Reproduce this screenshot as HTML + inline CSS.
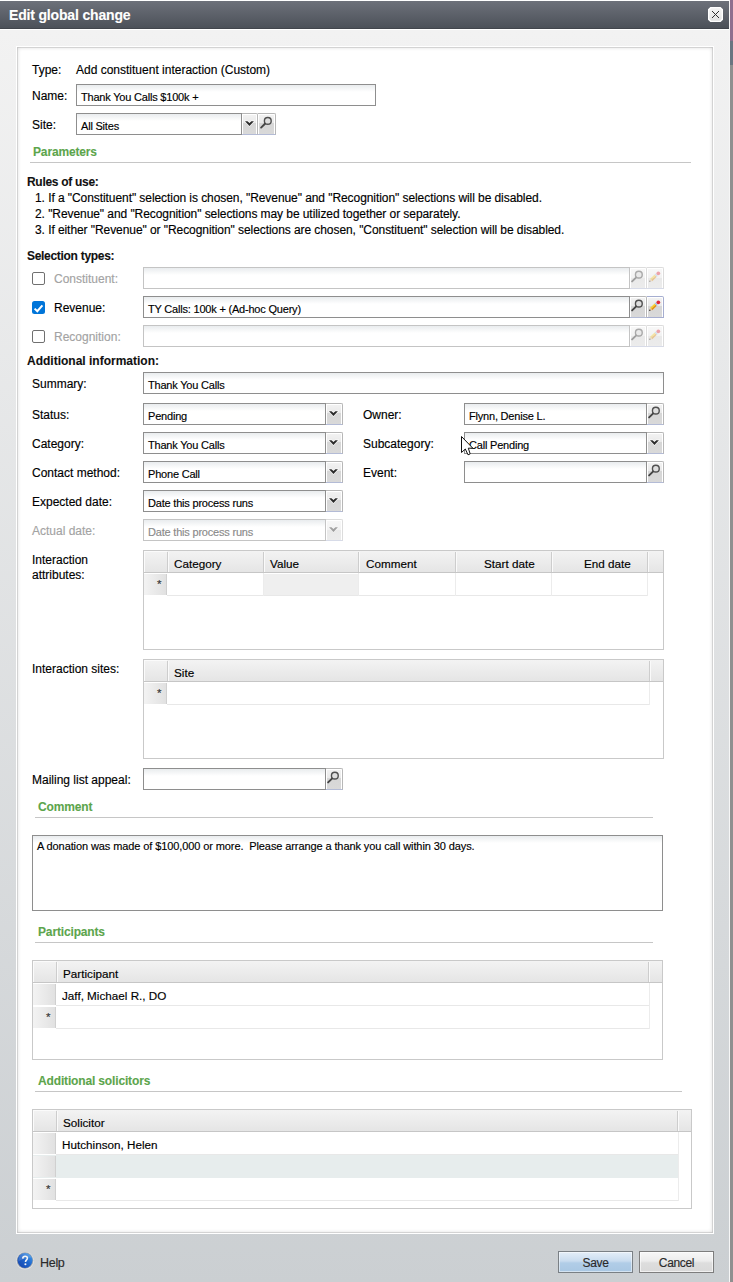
<!DOCTYPE html>
<html><head><meta charset="utf-8"><title>Edit global change</title>
<style>
*{box-sizing:border-box;margin:0;padding:0}
html,body{width:733px;height:1282px;overflow:hidden;background:#8f8f8f;font-family:"Liberation Sans",sans-serif;color:#000}
.a{position:absolute}
.t{position:absolute;white-space:nowrap;line-height:12px;font-size:12px;-webkit-text-stroke:0.15px currentColor}
.s11{font-size:11px;line-height:11px;letter-spacing:-0.2px;margin-top:1px}
.b{font-weight:bold;letter-spacing:-0.3px;-webkit-text-stroke:0.1px currentColor}
.g{color:#5ca54c;font-weight:bold;letter-spacing:-0.15px;-webkit-text-stroke:0.1px currentColor}
.dis{color:#a3a3a3}
.hr{position:absolute;height:1px;background:#c6c6c6}
.inp{position:absolute;border:1px solid #8e8e8e;background:linear-gradient(#e9ecee,#fff 7px)}
.inp.d{border-color:#c4c4c4}
.btn{position:absolute;border:1px solid #b7b7b7;border-left:0;border-bottom-color:#b3bbd6;border-top-right-radius:2px;
 background:linear-gradient(#f3f3f3,#e9e9e9 44%,#d6d6d6 44%,#d9d9d9);box-shadow:inset 1px 1px 0 #fff,inset -1px 0 0 #fff}
.btn.d{border-color:#dcdcdc;border-bottom-color:#d7dbe8;background:linear-gradient(#f8f8f8,#f2f2f2 50%,#e9e9e9 50%,#ececec)}
.btn svg{position:absolute;left:0;top:0}
.grid{position:absolute;border:1px solid #c9c9c9;background:#fff}
.gh{position:absolute;left:0;top:0;height:22px;background:linear-gradient(#f3f3f3,#e5e5e5);border-bottom:1px solid #c6c6c6}
.hd{position:absolute;top:1px;width:2px;height:20px;border-left:1px solid #cdcdcd;border-right:1px solid #fafafa}
.rh{position:absolute;left:0;width:23px;height:21px;background:linear-gradient(90deg,#f3f3f3,#e1e1e1);border-right:1px solid #d0d0d0}
.gl{position:absolute;height:1px;background:#e8e8e8}
.gv{position:absolute;width:1px;background:#ececec}
.star{left:13px;font-size:11px;color:#333}
.cell{position:absolute;white-space:nowrap;font-size:11.7px;line-height:12px;-webkit-text-stroke:0.15px currentColor}
</style></head><body>
<svg width="0" height="0" style="position:absolute"><defs>
<symbol id="chev" viewBox="0 0 17 22"><path d="M3 7.2H5.5L7.45 8.9L9.4 7.2H11.9L7.45 12Z" fill="#fff" opacity="0.7" stroke="#fff" stroke-width="1.4"/><path d="M3 7.2H5.5L7.45 8.9L9.4 7.2H11.9L7.45 12Z" fill="#2b2b2b"/></symbol>
<symbol id="mag" viewBox="0 0 18 22"><circle cx="9.8" cy="6.9" r="3.4" fill="#dedede" stroke="#505050" stroke-width="1.4"/><path d="M3.1 13.6L7 9.8" stroke="#444" stroke-width="1.9" stroke-linecap="round"/></symbol>
<symbol id="mag2" viewBox="0 0 17 22"><circle cx="8.85" cy="6.65" r="3.4" fill="#dedede" stroke="#505050" stroke-width="1.4"/><path d="M2.1 13.4L6 9.6" stroke="#444" stroke-width="1.9" stroke-linecap="round"/></symbol>
<symbol id="pen" viewBox="0 0 17 22"><path d="M3 10.93L7.64 6.53L8.74 7.69L4.1 12.09Z" fill="#f8d22c"/><path d="M4.1 12.09L8.74 7.69L9.84 8.85L5.2 13.25Z" fill="#e4900f"/><path d="M2.5 13.6L3 10.93L5.2 13.25Z" fill="#f2c89a"/><circle cx="2.85" cy="13.25" r="0.65" fill="#1a1a1a"/><path d="M7.64 6.53L8.66 5.57L10.86 7.89L9.84 8.85Z" fill="#9fc0ec"/><circle cx="11.3" cy="5.3" r="1.85" fill="#e02838"/></symbol>
</defs></svg>
<!-- right strip -->
<div class="a" style="left:730px;top:0;width:3px;height:41px;background:#8e6f8e"></div>
<div class="a" style="left:730px;top:41px;width:3px;height:24px;background:#6a7581"></div>

<!-- dialog -->
<div class="a" style="left:0;top:0;width:730px;height:1282px;background:linear-gradient(#f2f2f2 30px,#cbcfd2 1282px);border-top:1px solid #fff;border-right:1px solid #f6f6f6"></div>
<div class="a" style="left:0;top:1px;width:729px;height:28px;background:linear-gradient(#6d717a,#4c5159);border-bottom:1px solid #41454c"></div>
<div class="a" style="left:0;top:29px;width:729px;height:1px;background:#fff"></div>
<div class="t b" style="left:9px;top:8px;font-size:14px;line-height:14px;color:#fff;letter-spacing:-0.17px">Edit global change</div>
<!-- close button -->
<div class="a" style="left:708px;top:7px;width:15px;height:15px">
<svg width="15" height="15" viewBox="0 0 15 15"><defs><linearGradient id="cg" x1="0" y1="0" x2="0" y2="1"><stop offset="0" stop-color="#f4f4f4"/><stop offset="0.5" stop-color="#ececec"/><stop offset="1" stop-color="#dedede"/></linearGradient></defs><path d="M3 0.5H12L14.5 3V12L12 14.5H3L0.5 12V3Z" fill="url(#cg)" stroke="#fff" stroke-width="1.6"/><path d="M4 4L11 11M11 4L4 11" stroke="#2e2e2e" stroke-width="1"/></svg>
</div>

<!-- panel -->
<div class="a" style="left:16px;top:46px;width:698px;height:1188px;border:1px solid #fff;background:#fff">
 <div class="a" style="left:0;top:0;width:696px;height:1186px;box-shadow:inset 0 0 4px rgba(0,0,0,0.2),inset 0 0 0 1px rgba(0,0,0,0.1)"></div>
</div>

<!-- top fields -->
<div class="t" style="left:32px;top:64px">Type:</div>
<div class="t" style="left:76px;top:64px">Add constituent interaction (Custom)</div>
<div class="t" style="left:32px;top:90px">Name:</div>
<div class="inp" style="left:76px;top:84px;width:300px;height:22px"></div>
<div class="t s11" style="left:81px;top:91px">Thank You Calls $100k +</div>
<div class="t" style="left:32px;top:119px">Site:</div>
<div class="inp" style="left:76px;top:113px;width:166px;height:22px"></div>
<div class="t s11" style="left:81px;top:120px">All Sites</div>
<div class="btn" style="left:242px;top:113px;width:16px;height:22px"><svg width="17" height="22" viewBox="0 0 17 22" style="left:-0.5px"><use href="#chev"/></svg></div>
<div class="btn" style="left:258px;top:113px;width:18px;height:22px"><svg width="18" height="22"><use href="#mag"/></svg></div>

<div class="t g" style="left:33px;top:146px">Parameters</div>
<div class="hr" style="left:30px;top:162px;width:661px"></div>
<div class="t b" style="left:27px;top:176px;color:#111">Rules of use:</div>
<div class="t" style="left:35px;top:192px;letter-spacing:-0.07px">1. If a "Constituent" selection is chosen, "Revenue" and "Recognition" selections will be disabled.</div>
<div class="t" style="left:35px;top:208px;letter-spacing:-0.07px">2. "Revenue" and "Recognition" selections may be utilized together or separately.</div>
<div class="t" style="left:35px;top:224px;letter-spacing:-0.07px">3. If either "Revenue" or "Recognition" selections are chosen, "Constituent" selection will be disabled.</div>
<div class="t b" style="left:27px;top:250px;color:#111">Selection types:</div>

<!-- checkboxes -->
<div class="a" style="left:32px;top:272px;width:13px;height:13px;border:1.3px solid #707070;border-radius:2px;background:#fff"></div>
<div class="a" style="left:32px;top:301px;width:13px;height:13px;border-radius:2.5px;background:#0075d9"><svg width="13" height="13" viewBox="0 0 13 13"><path d="M2.6 6.6L5.3 9.2L10.4 3.4" fill="none" stroke="#fff" stroke-width="2"/></svg></div>
<div class="a" style="left:32px;top:330px;width:13px;height:13px;border:1.3px solid #707070;border-radius:2px;background:#fff"></div>
<div class="t dis" style="left:54px;top:273px">Constituent:</div>
<div class="t" style="left:54px;top:302px">Revenue:</div>
<div class="t dis" style="left:54px;top:331px">Recognition:</div>

<div class="inp d" style="left:143px;top:267px;width:487px;height:22px"></div>
<div class="btn d" style="left:630px;top:267px;width:17px;height:22px"><svg width="17" height="22" style="opacity:.45"><use href="#mag2"/></svg></div>
<div class="btn d" style="left:647px;top:267px;width:17px;height:22px"><svg width="17" height="22" style="opacity:.4"><use href="#pen"/></svg></div>
<div class="inp" style="left:143px;top:296px;width:487px;height:22px"></div>
<div class="t s11" style="left:148px;top:303px">TY Calls: 100k + (Ad-hoc Query)</div>
<div class="btn" style="left:630px;top:296px;width:17px;height:22px"><svg width="17" height="22"><use href="#mag2"/></svg></div>
<div class="btn" style="left:647px;top:296px;width:17px;height:22px;border-color:#a6aed0"><svg width="17" height="22"><use href="#pen"/></svg></div>
<div class="inp d" style="left:143px;top:325px;width:487px;height:22px"></div>
<div class="btn d" style="left:630px;top:325px;width:17px;height:22px"><svg width="17" height="22" style="opacity:.45"><use href="#mag2"/></svg></div>
<div class="btn d" style="left:647px;top:325px;width:17px;height:22px"><svg width="17" height="22" style="opacity:.4"><use href="#pen"/></svg></div>

<div class="t b" style="left:27px;top:355px;color:#111;letter-spacing:0">Additional information:</div>

<!-- additional info -->
<div class="t" style="left:32px;top:378px">Summary:</div>
<div class="inp" style="left:143px;top:372px;width:521px;height:22px"></div>
<div class="t s11" style="left:148px;top:379px">Thank You Calls</div>

<div class="t" style="left:32px;top:409px">Status:</div>
<div class="inp" style="left:143px;top:403px;width:183px;height:22px"></div>
<div class="t s11" style="left:148px;top:410px">Pending</div>
<div class="btn" style="left:326px;top:403px;width:17px;height:22px"><svg width="17" height="22"><use href="#chev"/></svg></div>

<div class="t" style="left:32px;top:438px">Category:</div>
<div class="inp" style="left:143px;top:432px;width:183px;height:22px"></div>
<div class="t s11" style="left:148px;top:439px">Thank You Calls</div>
<div class="btn" style="left:326px;top:432px;width:17px;height:22px"><svg width="17" height="22"><use href="#chev"/></svg></div>

<div class="t" style="left:32px;top:467px">Contact method:</div>
<div class="inp" style="left:143px;top:461px;width:183px;height:22px"></div>
<div class="t s11" style="left:148px;top:468px">Phone Call</div>
<div class="btn" style="left:326px;top:461px;width:17px;height:22px"><svg width="17" height="22"><use href="#chev"/></svg></div>

<div class="t" style="left:32px;top:496px">Expected date:</div>
<div class="inp" style="left:143px;top:490px;width:183px;height:22px"></div>
<div class="t s11" style="left:148px;top:497px">Date this process runs</div>
<div class="btn" style="left:326px;top:490px;width:17px;height:22px"><svg width="17" height="22"><use href="#chev"/></svg></div>

<div class="t dis" style="left:32px;top:525px">Actual date:</div>
<div class="inp d" style="left:143px;top:519px;width:183px;height:22px"></div>
<div class="t s11 dis" style="left:148px;top:526px;color:#8a8a8a">Date this process runs</div>
<div class="btn d" style="left:326px;top:519px;width:17px;height:22px"><svg width="17" height="22" style="opacity:.4"><use href="#chev"/></svg></div>

<div class="t" style="left:363px;top:409px">Owner:</div>
<div class="inp" style="left:464px;top:403px;width:183px;height:22px"></div>
<div class="t s11" style="left:469px;top:410px">Flynn, Denise L.</div>
<div class="btn" style="left:647px;top:403px;width:17px;height:22px"><svg width="17" height="22"><use href="#mag2"/></svg></div>

<div class="t" style="left:363px;top:438px">Subcategory:</div>
<div class="inp" style="left:464px;top:432px;width:183px;height:22px"></div>
<div class="t s11" style="left:469px;top:439px">Call Pending</div>
<div class="btn" style="left:647px;top:432px;width:17px;height:22px"><svg width="17" height="22"><use href="#chev"/></svg></div>

<div class="t" style="left:363px;top:467px">Event:</div>
<div class="inp" style="left:464px;top:461px;width:183px;height:22px"></div>
<div class="btn" style="left:647px;top:461px;width:17px;height:22px"><svg width="17" height="22"><use href="#mag2"/></svg></div>

<!-- interaction attributes grid -->
<div class="t" style="left:32px;top:554px">Interaction</div>
<div class="t" style="left:32px;top:569px">attributes:</div>
<div class="grid" style="left:143px;top:550px;width:521px;height:100px">
 <div class="gh" style="width:519px"></div>
 <div class="a" style="left:0;top:0;width:23px;height:21px;box-shadow:inset 1px 1px 0 #fbfbfb"></div>
 <div class="hd" style="left:23px"></div>
 <div class="hd" style="left:119px"></div>
 <div class="hd" style="left:214px"></div>
 <div class="hd" style="left:311px"></div>
 <div class="hd" style="left:407px"></div>
 <div class="hd" style="left:503px"></div>
 <div class="a" style="left:119px;top:23px;width:95px;height:21px;background:#efefef"></div>
 <div class="rh" style="top:23px"></div>
 <div class="gl" style="left:23px;top:44px;width:481px"></div>
 <div class="gv" style="left:119px;top:22px;height:23px"></div>
 <div class="gv" style="left:214px;top:22px;height:23px"></div>
 <div class="gv" style="left:311px;top:22px;height:23px"></div>
 <div class="gv" style="left:407px;top:22px;height:23px"></div>
 <div class="gv" style="left:503px;top:22px;height:23px"></div>
 <div class="cell star" style="top:27px">*</div>
 <div class="cell" style="left:30px;top:7px">Category</div>
 <div class="cell" style="left:126px;top:7px">Value</div>
 <div class="cell" style="left:222px;top:7px">Comment</div>
 <div class="cell" style="left:340px;top:7px">Start date</div>
 <div class="cell" style="left:440px;top:7px">End date</div>
</div>

<!-- interaction sites grid -->
<div class="t" style="left:32px;top:663px">Interaction sites:</div>
<div class="grid" style="left:143px;top:659px;width:521px;height:100px">
 <div class="gh" style="width:519px"></div>
 <div class="a" style="left:0;top:0;width:23px;height:21px;box-shadow:inset 1px 1px 0 #fbfbfb"></div>
 <div class="hd" style="left:23px"></div>
 <div class="hd" style="left:505px"></div>
 <div class="rh" style="top:23px"></div>
 <div class="gl" style="left:23px;top:44px;width:483px"></div>
 <div class="gv" style="left:505px;top:22px;height:23px"></div>
 <div class="cell star" style="top:27px">*</div>
 <div class="cell" style="left:30px;top:7px">Site</div>
</div>

<div class="t" style="left:32px;top:774px">Mailing list appeal:</div>
<div class="inp" style="left:143px;top:768px;width:183px;height:22px"></div>
<div class="btn" style="left:326px;top:768px;width:17px;height:22px"><svg width="17" height="22"><use href="#mag2"/></svg></div>

<!-- comment -->
<div class="t g" style="left:38px;top:801px">Comment</div>
<div class="hr" style="left:35px;top:817px;width:618px"></div>
<div class="inp" style="left:32px;top:835px;width:631px;height:76px"></div>
<div class="t s11" style="left:37px;top:840px;letter-spacing:-0.1px">A donation was made of $100,000 or more.&nbsp; Please arrange a thank you call within 30 days.</div>

<!-- participants -->
<div class="t g" style="left:38px;top:926px">Participants</div>
<div class="hr" style="left:35px;top:942px;width:618px"></div>
<div class="grid" style="left:32px;top:960px;width:631px;height:100px">
 <div class="gh" style="width:629px"></div>
 <div class="a" style="left:0;top:0;width:23px;height:21px;box-shadow:inset 1px 1px 0 #fbfbfb"></div>
 <div class="hd" style="left:23px"></div>
 <div class="hd" style="left:615px"></div>
 <div class="rh" style="top:23px"></div>
 <div class="gl" style="left:23px;top:44px;width:593px"></div>
 <div class="gv" style="left:616px;top:22px;height:23px"></div>
 <div class="cell" style="left:29px;top:29px">Jaff, Michael R., DO</div>
 <div class="rh" style="top:46px"></div>
 <div class="gl" style="left:23px;top:67px;width:593px"></div>
 <div class="gv" style="left:616px;top:45px;height:23px"></div>
 <div class="cell star" style="top:50px">*</div>
 <div class="cell" style="left:30px;top:7px">Participant</div>
</div>

<!-- additional solicitors -->
<div class="t g" style="left:38px;top:1075px">Additional solicitors</div>
<div class="hr" style="left:35px;top:1091px;width:647px"></div>
<div class="grid" style="left:32px;top:1109px;width:660px;height:100px">
 <div class="gh" style="width:658px"></div>
 <div class="a" style="left:0;top:0;width:23px;height:21px;box-shadow:inset 1px 1px 0 #fbfbfb"></div>
 <div class="hd" style="left:23px"></div>
 <div class="hd" style="left:644px"></div>
 <div class="rh" style="top:23px"></div>
 <div class="gl" style="left:23px;top:44px;width:622px"></div>
 <div class="gv" style="left:645px;top:22px;height:23px"></div>
 <div class="cell" style="left:29px;top:29px">Hutchinson, Helen</div>
 <div class="a" style="left:0;top:45px;width:646px;height:23px;background:#e7eded"></div>
 <div class="rh" style="top:46px"></div>
 <div class="gv" style="left:645px;top:45px;height:23px"></div>
 <div class="rh" style="top:69px"></div>
 <div class="gl" style="left:23px;top:90px;width:622px"></div>
 <div class="gv" style="left:645px;top:68px;height:23px"></div>
 <div class="cell star" style="top:73px">*</div>
 <div class="cell" style="left:30px;top:7px">Solicitor</div>
</div>

<!-- mouse cursor -->
<svg class="a" style="left:461px;top:436px" width="14" height="21" viewBox="0 0 14 21"><path d="M0.5 0.5V16.5L4.3 13L7 18.8L9.2 17.9L7.3 12.2H11.8Z" fill="#fff" stroke="#111" stroke-width="1" stroke-linejoin="miter"/></svg>


<!-- footer -->
<div class="a" style="left:16px;top:1252px;width:18px;height:18px">
<svg width="18" height="18" viewBox="0 0 18 18"><defs><linearGradient id="hg" x1="0.1" y1="0.9" x2="0.9" y2="0.1"><stop offset="0" stop-color="#1848b0"/><stop offset="0.55" stop-color="#1f66cc"/><stop offset="1" stop-color="#3f96e8"/></linearGradient></defs>
<circle cx="9" cy="8.7" r="8.9" fill="#eceef0" opacity="0.8"/><circle cx="9" cy="8.5" r="8.3" fill="#a2a6aa"/><circle cx="9" cy="8.5" r="7.5" fill="url(#hg)"/><path d="M2.5 9.5C5 7.5 10 6 15.5 5.5C14 2.5 11.5 1 9 1C5 1 2 4 2.5 9.5Z" fill="#fff" opacity="0.15"/><path d="M6.7 6.6C6.8 5.1 7.8 4.3 9.1 4.3C10.5 4.3 11.4 5.1 11.4 6.3C11.4 7.8 9.5 8 9.5 10" fill="none" stroke="#f4f4f4" stroke-width="1.6"/><circle cx="9.4" cy="12.3" r="1.05" fill="#f4f4f4"/></svg>
</div>
<div class="t" style="left:40px;top:1257px;font-size:12.5px;line-height:12px;color:#2a2a2a;letter-spacing:-0.3px">Help</div>
<div class="a" style="left:558px;top:1251px;width:75px;height:22px;border:1px solid #7a8085;background:linear-gradient(#e4eef8,#c9dcef 45%,#b1cde7 55%,#a9c7e3);box-shadow:inset 0 0 0 1px rgba(255,255,255,0.5)"></div>
<div class="t" style="left:558px;width:75px;text-align:center;top:1257px;color:#2a2a2a;letter-spacing:-0.35px">Save</div>
<div class="a" style="left:639px;top:1251px;width:75px;height:22px;border:1px solid #7d7d7d;background:linear-gradient(#f7f7f7,#ececec 45%,#dddddd 55%,#d9d9d9);box-shadow:inset 0 0 0 1px rgba(255,255,255,0.6)"></div>
<div class="t" style="left:639px;width:75px;text-align:center;top:1257px;color:#2a2a2a;letter-spacing:-0.35px">Cancel</div>
</body></html>
